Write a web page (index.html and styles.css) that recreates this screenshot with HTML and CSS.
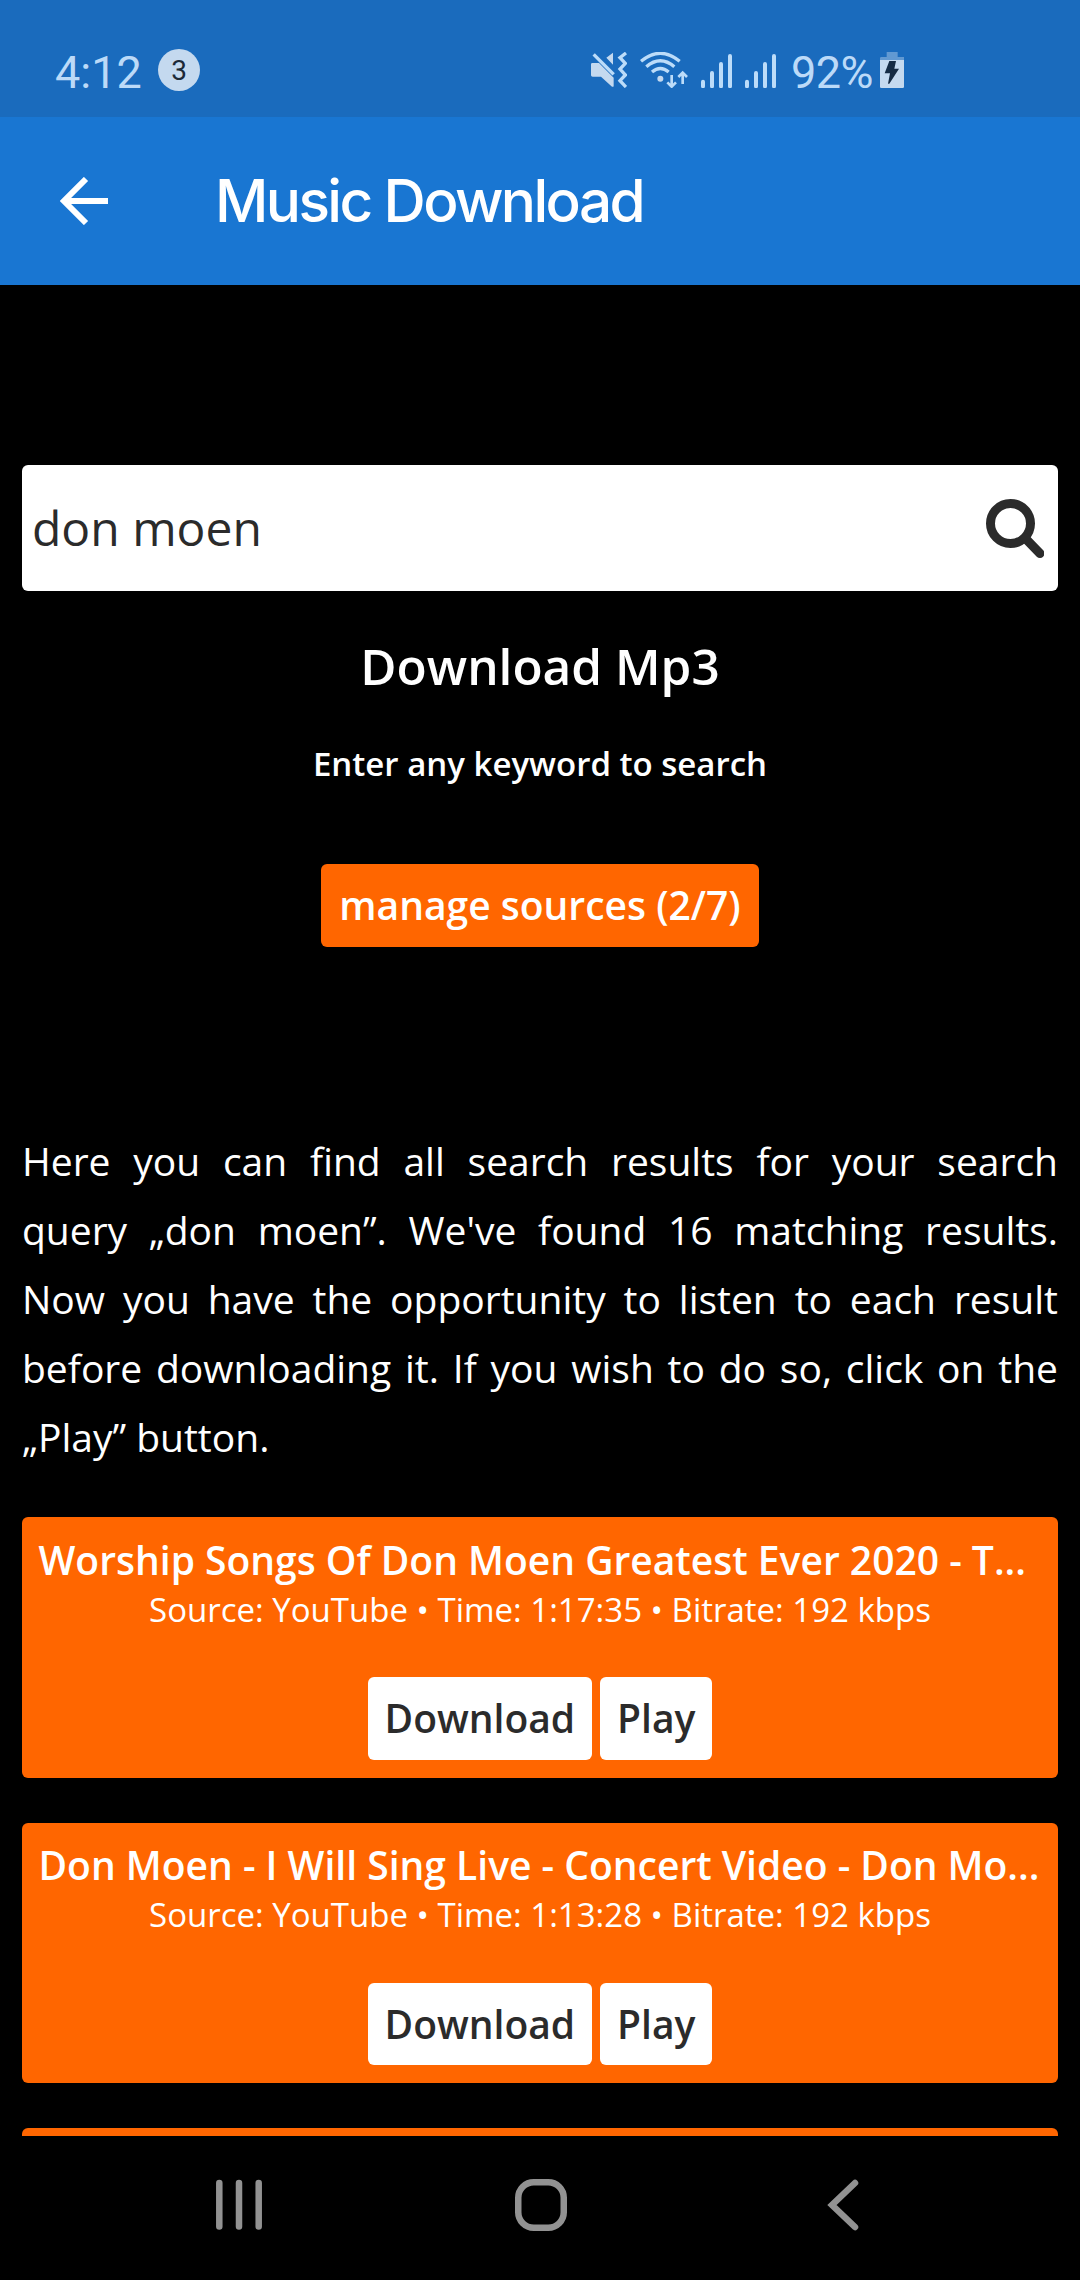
FILE: index.html
```html
<!DOCTYPE html>
<html lang="en">
<head>
<meta charset="utf-8">
<title>Music Download</title>
<link rel="stylesheet" href="styles.css">
</head>
<body>
<div class="screen">
  <div class="status">
    <span class="time">4:12</span>
    <span class="badge">3</span>
    <div class="status-icons">
      <svg class="mute" viewBox="0 0 108 108" width="36" height="36">
        <path class="fill" d="M0 37q0-4 4-4h20L68 77v24q0 5-5 3L30 74H5q-5 0-5-4zM66 2v36L46 17z"/>
        <path class="line" d="M8 7l60 60M105 3L87 17l16 17-16 17 16 18-16 17 18 19"/>
      </svg>
      <svg class="wifi" viewBox="0 0 144 108" width="48" height="36">
        <path class="line" d="M3 28Q61-20 119 28M19 44Q61 8 103 44M36 60Q61 39 86 60"/>
        <circle class="fill" cx="61" cy="80" r="9"/>
        <path class="line thin" d="M95 69v34M82 91l13 13 13-13M128 96V61M115 75l13-13 13 13"/>
      </svg>
      <svg class="signal" viewBox="0 0 93 108" width="31" height="36">
        <path class="bars" d="M6 89v14M33 63v40M60 36v67M87 12v91"/>
      </svg>
      <svg class="signal" viewBox="0 0 93 108" width="31" height="36">
        <path class="bars" d="M6 89v14M33 63v40M60 36v67M87 12v91"/>
      </svg>
      <span class="percent">92%</span>
      <svg class="battery" viewBox="0 0 72 108" width="24" height="36">
        <path class="dim" d="M20 0h33v15h19v9H0v-5q0-4 4-4h16z"/>
        <path class="fill" d="M0 24h72v80q0 4-4 4H4q-4 0-4-4z"/>
        <path class="bolt" d="M28 27h20l-5 23h14L28 95h-4l6-31H14z"/>
      </svg>
    </div>
  </div>
  <header class="appbar">
    <svg class="back" viewBox="0 0 48 48" width="48" height="48">
      <path d="M48 24H4M26 2L4 24l22 22"/>
    </svg>
    <span class="app-title">Music Download</span>
  </header>
  <main class="content">
    <div class="search">
      <span class="query">don moen</span>
      <svg viewBox="0 0 58 59" width="58" height="59">
        <circle cx="24.5" cy="24.5" r="20"/>
        <path d="M39 39l15 15.500"/>
      </svg>
    </div>
    <h1>Download Mp3</h1>
    <h2>Enter any keyword to search</h2>
    <span class="button sources">manage sources (2/7)</span>
    <p class="intro">Here you can find all search results for your search query „don moen”. We've found 16 matching results. Now you have the opportunity to listen to each result before downloading it. If you wish to do so, click on the „Play” button.</p>
    <section class="card">
      <div class="song">Worship Songs Of Don Moen Greatest Ever 2020 - T...</div>
      <div class="meta">Source: YouTube • Time: 1:17:35 • Bitrate: 192 kbps</div>
      <div class="actions"><span class="button">Download</span><span class="button">Play</span></div>
    </section>
    <section class="card">
      <div class="song">Don Moen - I Will Sing Live - Concert Video - Don Mo...</div>
      <div class="meta">Source: YouTube • Time: 1:13:28 • Bitrate: 192 kbps</div>
      <div class="actions"><span class="button">Download</span><span class="button">Play</span></div>
    </section>
    <section class="card"></section>
  </main>
  <nav class="navbar">
    <svg viewBox="0 0 52 52" width="52" height="52"><path d="M8.300 4v43.500M28 4v43.500M47.700 4v43.500"/></svg>
    <svg viewBox="0 0 52 52" width="52" height="52"><rect x="3.250" y="3.250" width="45.500" height="45.500" rx="15.500"/></svg>
    <svg viewBox="0 0 52 52" width="52" height="52"><path d="M37 4L14 26l23 22"/></svg>
  </nav>
</div>
</body>
</html>
```
FILE: styles.css
```css
* { box-sizing: border-box; }

body {
  margin: 0;
  background: #000;
  color: #fff;
  font-family: "Open Sans", sans-serif;
  font-size: 39px;
}

svg { display: block; fill: none; flex: none; }

.screen {
  display: flex;
  flex-direction: column;
  width: 1080px;
  height: 2280px;
  overflow: hidden;
}

/* Status bar */
.status {
  display: flex;
  align-items: center;
  flex: none;
  height: 117px;
  padding: 23px 176px 0 55px;
  background: #1a6bbd;
  color: #bcdaf8;
  font-family: Roboto, sans-serif;
  font-size: 45px;
  line-height: 52px;
}
.time { width: 103px; padding-top: 5px; }
.badge {
  width: 42px;
  height: 42px;
  border-radius: 50%;
  background: #c4d9ef;
  color: #1c2a38;
  font-size: 28px;
  line-height: 43px;
  text-align: center;
}
.status-icons { display: flex; align-items: center; margin-left: auto; }
.fill { fill: #c4d9ef; }
.line { stroke: #bcdcf9; stroke-width: 10; }
.thin { stroke-width: 8; }
.bars { stroke: #bcdcf9; stroke-width: 12; stroke-linecap: round; }
.dim { fill: #6199d2; }
.bolt { fill: #152b44; }
.wifi { margin-left: 13px; }
.signal { margin-left: 13px; }
.percent { margin-left: 15px; width: 83px; padding-top: 5px; white-space: nowrap; letter-spacing: -0.5px; }
.battery { margin-left: 6px; }

/* App bar */
.appbar {
  display: flex;
  align-items: center;
  flex: none;
  height: 168px;
  padding: 0 60px;
  background: #1976d2;
}
.back path { stroke: #fff; stroke-width: 6; }
.app-title {
  margin-left: 107px;
  font-family: Inter, sans-serif;
  font-size: 58.5px;
  font-weight: 500;
  letter-spacing: -2.6px;
  line-height: 70px;
}

/* Page */
.content {
  display: flex;
  flex-direction: column;
  align-items: center;
  flex: none;
  height: 1851px;
  padding: 180px 22px 0;
  overflow: hidden;
}
.search {
  display: flex;
  align-items: center;
  justify-content: space-between;
  flex: none;
  width: 100%;
  height: 126px;
  padding: 0 14px 0 10px;
  border-radius: 6px;
  background: #fff;
  color: #2b2b2b;
  font-size: 48px;
}
.query { padding-bottom: 2px; }
.search svg { stroke: #2b2b2b; stroke-width: 9; stroke-linecap: round; }
h1, h2 { margin: 0; font-weight: 600; }
h1 { margin-top: 45px; font-size: 49.5px; line-height: 60px; }
h2 { margin-top: 43px; font-size: 33px; line-height: 50px; }
.button {
  padding: 0 17px;
  border-radius: 6px;
  background: #fff;
  color: #2b2b2b;
  font-weight: 600;
  line-height: 82.5px;
  white-space: nowrap;
}
.sources { margin-top: 75px; padding: 0 18px; background: #ff6600; color: #fff; }
.intro {
  width: 100%;
  margin: 179px 0 46.6px;
  line-height: 69px;
  text-align: justify;
}
.card {
  flex: none;
  width: 100%;
  height: 260.75px;
  margin-bottom: 44.75px;
  padding: 16.7px 16.5px;
  border-radius: 6px;
  background: #ff6600;
  text-align: center;
}
.song {
  font-weight: 600;
  line-height: 52px;
  text-align: left;
  white-space: nowrap;
}
.meta { font-size: 33px; line-height: 48px; }
.actions { display: flex; justify-content: center; gap: 8px; margin-top: 43.3px; }

/* Navigation bar */
.navbar {
  display: flex;
  justify-content: space-between;
  padding: 43px 210px 0 211px;
}
.navbar svg { stroke: #929292; stroke-width: 6.5; stroke-linecap: round; }
```
